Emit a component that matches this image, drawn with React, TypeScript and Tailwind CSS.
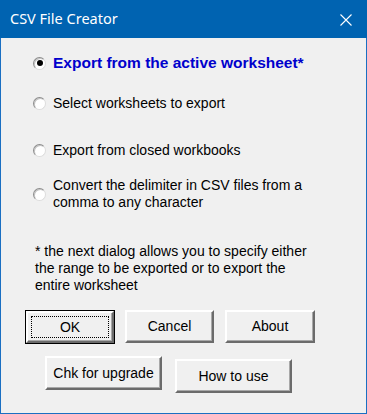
import { ReactNode } from 'react'

const ui = { fontFamily: '"Liberation Sans", Arial, sans-serif' }

function Radio({ checked = false }: { checked?: boolean }) {
  return (
    <span className="relative w-[13px] h-[13px] shrink-0 rounded-full bg-white border border-[#8c8c8c] border-r-[#dcdcdc] border-b-[#dcdcdc] shadow-[inset_1px_1px_0_#c4c4c4] flex items-center justify-center">
      {checked && <span className="w-[6px] h-[6px] rounded-full bg-black" />}
    </span>
  )
}

function Btn({ children, className = '', focused = false }: { children: ReactNode; className?: string; focused?: boolean }) {
  const inner = (
    <div className="h-full w-full bg-[#f0f0f0] border-2 border-t-white border-l-white border-r-[#6b6b6b] border-b-[#6b6b6b] shadow-[inset_-1px_-1px_0_#a8a8a8] flex items-center justify-center text-[14px] text-black">
      {focused ? (
        <div className="w-[calc(100%-6px)] h-[calc(100%-6px)] border border-dotted border-black flex items-center justify-center">
          {children}
        </div>
      ) : (
        children
      )}
    </div>
  )
  if (focused) {
    return <div className={`border border-black ${className}`}>{inner}</div>
  }
  return <div className={className}>{inner}</div>
}

export default function App() {
  return (
    <div className="w-[367px] h-[414px] bg-[#f0f0f0] flex flex-col border-x border-b border-[#1a6fc2]" style={ui}>
      {/* Title bar */}
      <div className="h-[38px] -mx-px bg-[#0063b1] flex items-center justify-between pl-[10px] pr-[15px] shrink-0">
        <span className="text-white text-[14.5px] leading-none pb-[2px]" style={{ fontFamily: '"Noto Sans", "Open Sans", sans-serif' }}>
          CSV File Creator
        </span>
        <svg width="12" height="12" viewBox="0 0 12 12" className="mt-[1px]">
          <path d="M0.5 0.5 L11.5 11.5 M11.5 0.5 L0.5 11.5" stroke="white" strokeWidth="1.1" />
        </svg>
      </div>

      {/* Options */}
      <div className="flex flex-col pl-[32px] pt-[15px]">
        <label className="h-[20px] flex items-center gap-[7px]">
          <Radio checked />
          <span className="text-[15.5px] font-bold text-[#0000cc]">Export from the active worksheet*</span>
        </label>
        <label className="h-[20px] mt-[20px] flex items-center gap-[7px]">
          <Radio />
          <span className="text-[14px] text-black">Select worksheets to export</span>
        </label>
        <label className="h-[20px] mt-[27px] flex items-center gap-[7px]">
          <Radio />
          <span className="text-[14px] text-black">Export from closed workbooks</span>
        </label>
        <label className="mt-[17px] flex items-center gap-[7px]">
          <Radio />
          <span className="text-[14px] leading-[17px] text-black">
            Convert the delimiter in CSV files from a
            <br />
            comma to any character
          </span>
        </label>
        <p className="mt-[32px] ml-[2px] text-[14px] leading-[17px] text-black">
          * the next dialog allows you to specify either
          <br />
          the range to be exported or to export the
          <br />
          entire worksheet
        </p>
      </div>

      {/* Buttons */}
      <div className="flex flex-col mt-[16px]">
        <div className="flex pl-[24px] gap-[10px]">
          <Btn focused className="w-[90px] h-[34px]">OK</Btn>
          <Btn className="w-[89px] h-[33px]">Cancel</Btn>
          <Btn className="w-[90px] h-[33px] ml-px">About</Btn>
        </div>
        <div className="flex items-start pl-[44px] gap-[13px] mt-[12px]">
          <Btn className="w-[117px] h-[34px]">Chk for upgrade</Btn>
          <Btn className="w-[117px] h-[34px] mt-[3px]">How to use</Btn>
        </div>
      </div>
    </div>
  )
}
